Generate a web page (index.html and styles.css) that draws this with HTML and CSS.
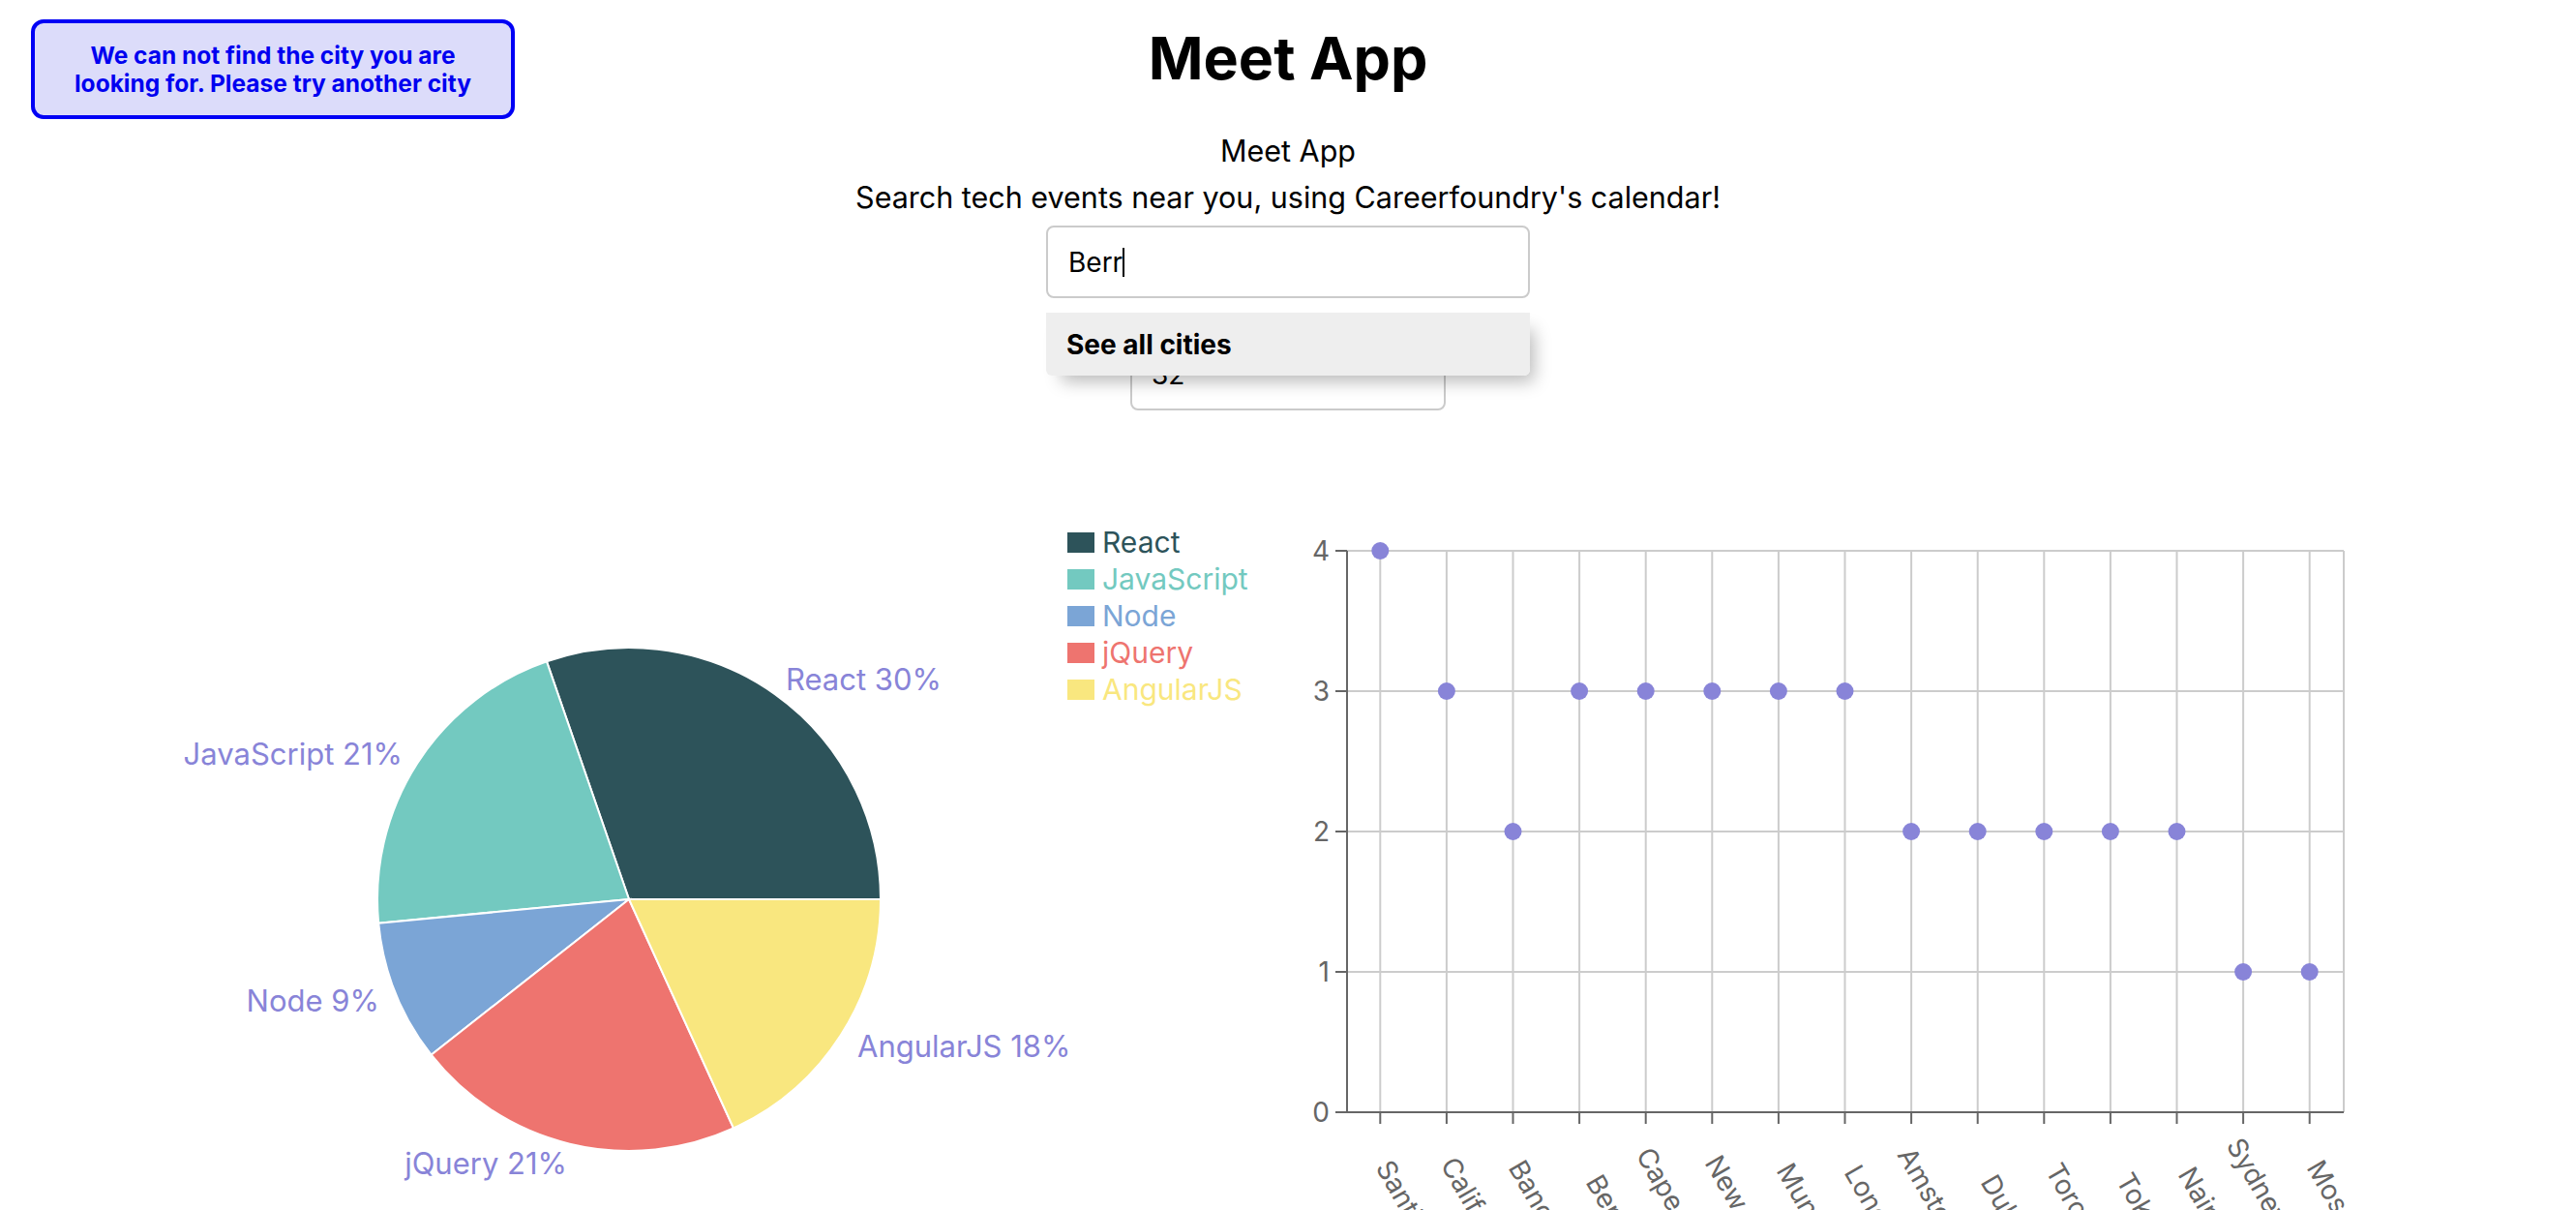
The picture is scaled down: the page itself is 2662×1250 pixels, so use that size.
FILE: index.html
```html
<!DOCTYPE html>
<html lang="en">
<head>
<meta charset="utf-8">
<title>Meet App</title>
<link rel="stylesheet" href="styles.css">
</head>
<body>
<div class="app">
  <div class="alert">We can not find the city you are<br>looking for. Please try another city</div>
  <h1 class="title">Meet App</h1>
  <p class="subtitle first">Meet App</p>
  <p class="subtitle">Search tech events near you, using Careerfoundry's calendar!</p>
  <div class="city-search">
    <div class="city-input">Berr<span class="caret"></span></div>
    <ul class="suggestions"><li>See all cities</li></ul>
  </div>
  <input class="number-input" type="text" value="32">
  <div class="charts">
    <div class="pie-wrap">
      <svg class="pie" viewBox="0 0 1100 750" xmlns="http://www.w3.org/2000/svg">
        <g class="slices">
          <path class="s-react" d="M650 429 L910 429 A260 260 0 0 0 564.96 183.30 Z"/>
          <path class="s-js" d="M650 429 L564.96 183.30 A260 260 0 0 0 391.18 453.72 Z"/>
          <path class="s-node" d="M650 429 L391.18 453.72 A260 260 0 0 0 445.63 589.72 Z"/>
          <path class="s-jquery" d="M650 429 L445.63 589.72 A260 260 0 0 0 758.01 665.50 Z"/>
          <path class="s-angular" d="M650 429 L758.01 665.50 A260 260 0 0 0 910 429 Z"/>
        </g>
        <text class="pie-label start" x="812" y="201">React 30%</text>
        <text class="pie-label end" x="416" y="278">JavaScript 21%</text>
        <text class="pie-label end" x="392" y="533">Node 9%</text>
        <text class="pie-label end" x="586" y="701">jQuery 21%</text>
        <text class="pie-label start" x="886" y="580">AngularJS 18%</text>
      </svg>
      <ul class="legend">
        <li class="l-react"><span class="swatch"></span>React</li>
        <li class="l-js"><span class="swatch"></span>JavaScript</li>
        <li class="l-node"><span class="swatch"></span>Node</li>
        <li class="l-jquery"><span class="swatch"></span>jQuery</li>
        <li class="l-angular"><span class="swatch"></span>AngularJS</li>
      </ul>
    </div>
    <svg class="scatter" viewBox="0 0 1331 750" xmlns="http://www.w3.org/2000/svg">
      <g class="grid">
        <line x1="61" y1="69" x2="1091" y2="69"/>
        <line x1="61" y1="214" x2="1091" y2="214"/>
        <line x1="61" y1="359" x2="1091" y2="359"/>
        <line x1="61" y1="504" x2="1091" y2="504"/>
        <line x1="95.3" y1="69" x2="95.3" y2="649"/>
        <line x1="163.9" y1="69" x2="163.9" y2="649"/>
        <line x1="232.5" y1="69" x2="232.5" y2="649"/>
        <line x1="301.1" y1="69" x2="301.1" y2="649"/>
        <line x1="369.7" y1="69" x2="369.7" y2="649"/>
        <line x1="438.3" y1="69" x2="438.3" y2="649"/>
        <line x1="506.9" y1="69" x2="506.9" y2="649"/>
        <line x1="575.5" y1="69" x2="575.5" y2="649"/>
        <line x1="644.1" y1="69" x2="644.1" y2="649"/>
        <line x1="712.7" y1="69" x2="712.7" y2="649"/>
        <line x1="781.3" y1="69" x2="781.3" y2="649"/>
        <line x1="849.9" y1="69" x2="849.9" y2="649"/>
        <line x1="918.5" y1="69" x2="918.5" y2="649"/>
        <line x1="987.1" y1="69" x2="987.1" y2="649"/>
        <line x1="1055.7" y1="69" x2="1055.7" y2="649"/>
        <line x1="1091" y1="69" x2="1091" y2="649"/>
      </g>
      <g class="axis">
        <line x1="61" y1="69" x2="61" y2="649"/>
        <line x1="61" y1="649" x2="1091" y2="649"/>
        <line x1="49" y1="69" x2="61" y2="69"/>
        <line x1="49" y1="214" x2="61" y2="214"/>
        <line x1="49" y1="359" x2="61" y2="359"/>
        <line x1="49" y1="504" x2="61" y2="504"/>
        <line x1="49" y1="649" x2="61" y2="649"/>
        <line x1="95.3" y1="649" x2="95.3" y2="661"/>
        <line x1="163.9" y1="649" x2="163.9" y2="661"/>
        <line x1="232.5" y1="649" x2="232.5" y2="661"/>
        <line x1="301.1" y1="649" x2="301.1" y2="661"/>
        <line x1="369.7" y1="649" x2="369.7" y2="661"/>
        <line x1="438.3" y1="649" x2="438.3" y2="661"/>
        <line x1="506.9" y1="649" x2="506.9" y2="661"/>
        <line x1="575.5" y1="649" x2="575.5" y2="661"/>
        <line x1="644.1" y1="649" x2="644.1" y2="661"/>
        <line x1="712.7" y1="649" x2="712.7" y2="661"/>
        <line x1="781.3" y1="649" x2="781.3" y2="661"/>
        <line x1="849.9" y1="649" x2="849.9" y2="661"/>
        <line x1="918.5" y1="649" x2="918.5" y2="661"/>
        <line x1="987.1" y1="649" x2="987.1" y2="661"/>
        <line x1="1055.7" y1="649" x2="1055.7" y2="661"/>
      </g>
      <g class="ytick">
        <text x="43" y="69">4</text>
        <text x="43" y="214">3</text>
        <text x="43" y="359">2</text>
        <text x="43" y="504">1</text>
        <text x="43" y="649">0</text>
      </g>
      <g class="dots">
        <circle cx="95.3" cy="69" r="9"/>
        <circle cx="163.9" cy="214" r="9"/>
        <circle cx="232.5" cy="359" r="9"/>
        <circle cx="301.1" cy="214" r="9"/>
        <circle cx="369.7" cy="214" r="9"/>
        <circle cx="438.3" cy="214" r="9"/>
        <circle cx="506.9" cy="214" r="9"/>
        <circle cx="575.5" cy="214" r="9"/>
        <circle cx="644.1" cy="359" r="9"/>
        <circle cx="712.7" cy="359" r="9"/>
        <circle cx="781.3" cy="359" r="9"/>
        <circle cx="849.9" cy="359" r="9"/>
        <circle cx="918.5" cy="359" r="9"/>
        <circle cx="987.1" cy="504" r="9"/>
        <circle cx="1055.7" cy="504" r="9"/>
      </g>
      <g class="xtick">
        <text x="90" y="706" transform="rotate(60 90 706)">Santiago</text>
        <text x="157" y="703" transform="rotate(60 157 703)">California</text>
        <text x="227" y="706" transform="rotate(60 227 706)">Bangkok</text>
        <text x="307" y="721" transform="rotate(60 307 721)">Berlin</text>
        <text x="359" y="693" transform="rotate(60 359 693)">Cape Town</text>
        <text x="430" y="701" transform="rotate(60 430 701)">New York</text>
        <text x="504" y="709" transform="rotate(60 504 709)">Munich</text>
        <text x="574" y="711" transform="rotate(60 574 711)">London</text>
        <text x="629" y="693" transform="rotate(60 629 693)">Amsterdam</text>
        <text x="715" y="721" transform="rotate(60 715 721)">Dubai</text>
        <text x="782" y="709" transform="rotate(60 782 709)">Toronto</text>
        <text x="855" y="719" transform="rotate(60 855 719)">Tokyo</text>
        <text x="919" y="713" transform="rotate(60 919 713)">Nairobi</text>
        <text x="969" y="683" transform="rotate(60 969 683)">Sydney NSW</text>
        <text x="1052" y="706" transform="rotate(60 1052 706)">Moscow</text>
      </g>
    </svg>
  </div>
</div>
</body>
</html>
```
FILE: styles.css
```css
* { box-sizing: border-box; }
html, body { margin: 0; height: 100%; overflow: hidden; background: #fff; }
body { font-family: Inter, "Noto Sans", sans-serif; color: #000; }

.app { position: relative; display: flex; flex-direction: column; align-items: center; }

.alert {
  position: absolute; left: 32px; top: 20px;
  width: 500px; height: 103px;
  display: flex; align-items: center; justify-content: center; text-align: center;
  border: 4px solid #0000f5; border-radius: 13px;
  background: #dcdcfa; color: #0000f0;
  font-weight: 700; font-size: 24.5px; line-height: 29px;
}

.title { margin: 22px 0 0; font-size: 61px; line-height: 76px; font-weight: 700; }
.subtitle { margin: 0; font-size: 30.5px; line-height: 48px; }
.subtitle.first { margin-top: 34px; }

.city-search { position: relative; width: 500px; margin-top: 5px; }
.city-input {
  height: 75px; border: 2px solid #cbcbcb; border-radius: 8px;
  padding-left: 21px; font-size: 28px; display: flex; align-items: center;
}
.caret { display: inline-block; width: 2px; height: 30px; background: #000; margin-left: 0; }
.suggestions {
  position: absolute; top: 90px; left: 0; width: 500px; margin: 0; padding: 0;
  list-style: none; z-index: 2;
  box-shadow: 10px 12px 18px -6px rgba(0,0,0,0.28);
  border-radius: 0 0 6px 6px;
}
.suggestions li {
  height: 65px; display: flex; align-items: center; padding-left: 21px;
  background: #eee; font-weight: 700; font-size: 28px; border-radius: 0 0 6px 6px;
}

.number-input {
  margin-top: 41px; width: 326px; height: 75px;
  border: 2px solid #cbcbcb; border-radius: 8px; padding: 0 0 0 20px;
  font-family: inherit; font-size: 28px; color: #000; background: #fff; outline: none;
}

.charts { display: flex; width: 100%; margin-top: 76px; }
.pie-wrap { display: flex; width: 1331px; flex: none; }
.pie { width: 1100px; height: 750px; flex: none; display: block; overflow: visible; }
.slices path { stroke: #fff; stroke-width: 2; }
.s-react { fill: #2d535a; }
.s-js { fill: #73c9c0; }
.s-node { fill: #7ba5d6; }
.s-jquery { fill: #ee746f; }
.s-angular { fill: #f9e77f; }
.pie-label { font-size: 31px; fill: #8884d8; dominant-baseline: central; }
.pie-label.start { text-anchor: start; }
.pie-label.end { text-anchor: end; }

.legend { list-style: none; margin: 41px 0 0 3px; padding: 0; font-size: 30px; line-height: 38px; }
.legend li { display: flex; align-items: center; gap: 8px; }
.legend .swatch { width: 28px; height: 21px; flex: none; }
.l-react { color: #2d535a; } .l-react .swatch { background: #2d535a; }
.l-js { color: #73c9c0; } .l-js .swatch { background: #73c9c0; }
.l-node { color: #7ba5d6; } .l-node .swatch { background: #7ba5d6; }
.l-jquery { color: #ee746f; } .l-jquery .swatch { background: #ee746f; }
.l-angular { color: #f9e77f; } .l-angular .swatch { background: #f9e77f; }

.scatter { width: 1331px; height: 750px; flex: none; display: block; }
.grid line { stroke: #ccc; stroke-width: 2; }
.axis line { stroke: #666; stroke-width: 2; }
.ytick text { font-size: 28px; fill: #666; text-anchor: end; dominant-baseline: central; }
.xtick text { font-size: 28px; fill: #666; text-anchor: start; }
.dots circle { fill: #8884d8; }
```
